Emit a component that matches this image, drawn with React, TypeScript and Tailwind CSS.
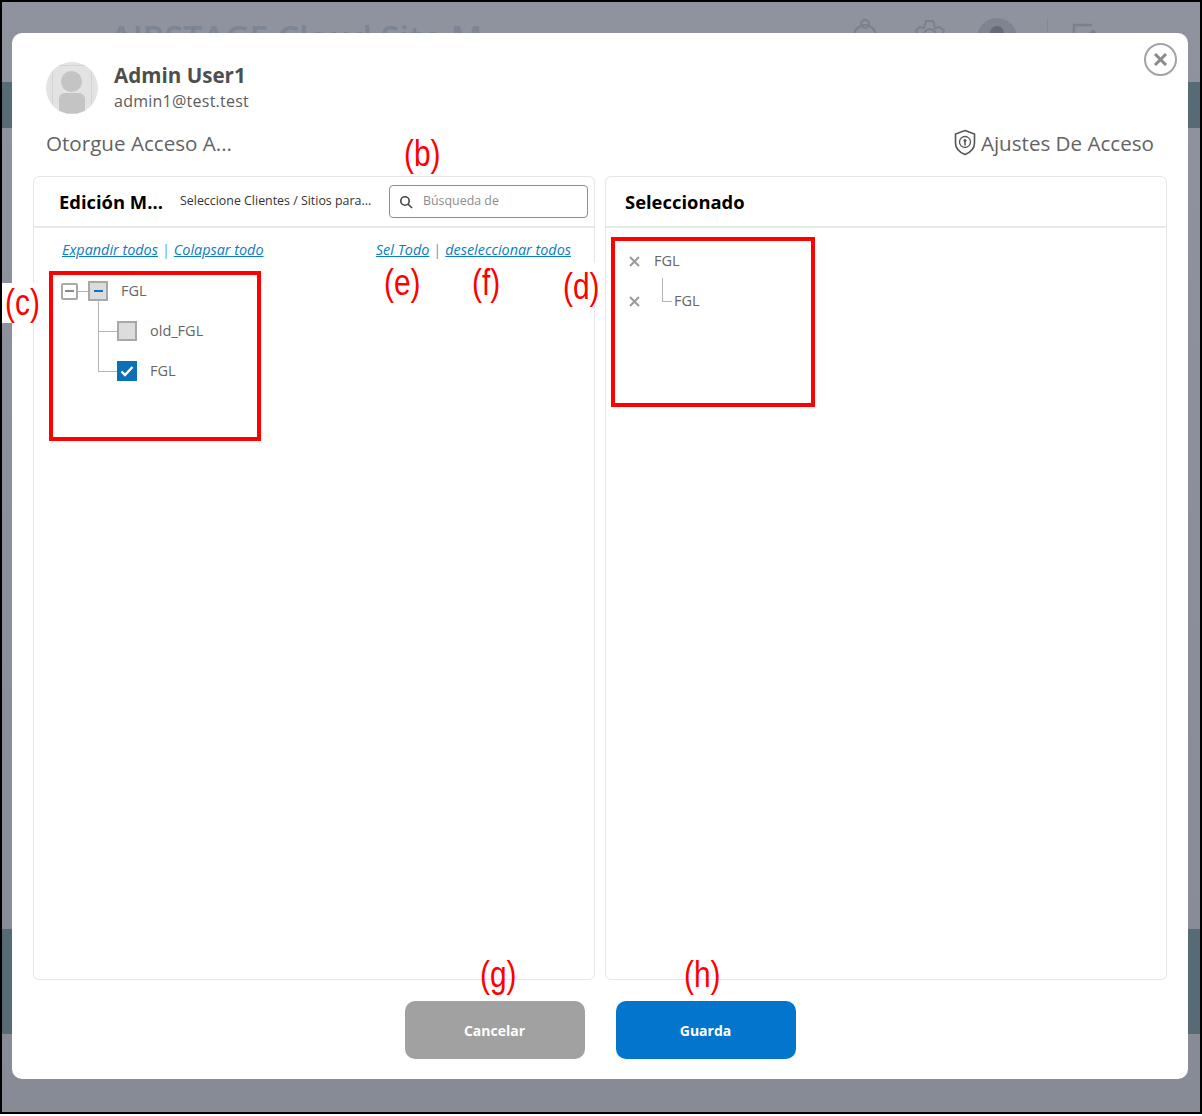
import React from "react";

function Red({ className, children }: { className: string; children: React.ReactNode }) {
  return (
    <span className={`absolute text-[#ff0000] text-[36px] leading-[40px] scale-x-[0.83] origin-left font-['Liberation_Sans',sans-serif] ${className}`}>
      {children}
    </span>
  );
}

function Link({ children }: { children: React.ReactNode }) {
  return <span className="italic underline text-[#0a7cc4] text-[14.4px] leading-[20px]">{children}</span>;
}

function Sep() {
  return <span className="text-[#0a7cc4] text-[14.4px] leading-[20px] opacity-70">|</span>;
}

function XMark() {
  return (
    <svg width="11" height="11" viewBox="0 0 11 11" className="shrink-0">
      <path d="M1 1 L10 10 M10 1 L1 10" stroke="#9a9a9a" strokeWidth="2" />
    </svg>
  );
}

export default function App() {
  return (
    <div className="h-[1116px] bg-white font-['Open_Sans',sans-serif]">
      <div className="relative h-[1114px] overflow-hidden border-2 border-black bg-gradient-to-b from-[#8e939e] to-[#868b95]">
        {/* dimmed page behind the dialog */}
        <div className="h-[80px] pl-[108px] pr-[100px] pt-[16px] flex items-start justify-between">
          <span className="text-[#7c8594] text-[34px] leading-[40px] font-semibold whitespace-nowrap">AIRSTAGE Cloud Site M</span>
          <div className="flex items-start gap-[30px] text-[#7b808a]">
            <svg width="34" height="34" viewBox="0 0 34 34" fill="none" stroke="currentColor" strokeWidth="2" className="-ml-[4px]"><circle cx="14" cy="6" r="4" /><path d="M3 28 V18 a11 11 0 0 1 22 0 V28" /></svg>
            <svg width="34" height="34" viewBox="0 0 34 34" fill="none" stroke="currentColor" strokeWidth="2" className="-ml-[2px]">
              <path d="M3 12 L7 9 L11 10 L13 3 L20 3 L22 10 L26 9 L31 12 L29 18" />
              <path d="M3 12 L5 18" />
              <circle cx="17" cy="17" r="6" />
            </svg>
            <div className="w-[40px] h-[40px] rounded-full bg-[#7f8490] flex justify-center pt-2"><div className="w-[14px] h-[14px] rounded-full bg-[#656a76]" /></div>
            <div className="w-px h-[34px] bg-[#838893]" />
            <svg width="30" height="34" viewBox="0 0 30 34" fill="none" stroke="currentColor" strokeWidth="2.5" className="-ml-[8px]"><path d="M22 7 H4 V34" /><path d="M18 18 L23 13 L28 18" /></svg>
          </div>
        </div>
        <div className="h-[46px] bg-[#566b75]" />
        <div className="h-[801px]" />
        <div className="h-[105px] bg-[#566b75]" />

        {/* dialog */}
        <div className="absolute left-[10px] top-[31px] w-[1176px] h-[1046px] bg-white rounded-[10px] flex flex-col">
          <div className="flex items-start pl-[34px] pt-[29px]">
            <div className="relative w-[52px] h-[52px] rounded-full bg-[#e3e3e3] overflow-hidden shrink-0">
              <div className="absolute left-[15px] top-[9px] w-[21px] h-[21px] rounded-full bg-[#c4c4c4]" />
              <div className="absolute left-[13px] top-[31px] w-[26px] h-[24px] rounded-[6px] bg-[#c4c4c4]" />
              <div className="absolute left-[6px] top-[3px] bottom-0 right-[6px] border border-[#d4d4d4]" />
            </div>
            <div className="ml-[16px] flex flex-col">
              <span className="text-[20.6px] leading-[27px] font-bold text-[#4e4e4e]">Admin User1</span>
              <span className="text-[16px] leading-[25px] text-[#5c5c5c] tracking-[0.25px]">admin1@test.test</span>
            </div>
          </div>

          <button className="absolute right-[11px] top-[10px] w-[33px] h-[33px] rounded-full border-2 border-[#a3a3a3] flex items-center justify-center">
            <svg width="15" height="15" viewBox="0 0 15 15"><path d="M2 2 L13 13 M13 2 L2 13" stroke="#8a8a8a" strokeWidth="3" /></svg>
          </button>

          <div className="flex items-center justify-between pl-[34px] pr-[34px] mt-[10px] h-[38px]">
            <span className="text-[20.6px] text-[#636363]">Otorgue Acceso A...</span>
            <div className="flex items-center gap-[5px]">
              <svg width="22" height="27" viewBox="0 0 22 27" fill="none" stroke="#555" strokeWidth="1.6">
                <path d="M11 1.5 L20.5 5 V14 C20.5 19.5 16 23.5 11 25.5 C6 23.5 1.5 19.5 1.5 14 V5 Z" />
                <circle cx="11" cy="13" r="5.5" strokeWidth="1.3" />
                <circle cx="11" cy="11.5" r="1.5" fill="#555" stroke="none" />
                <path d="M11 12 V16.5" strokeWidth="1.5" />
              </svg>
              <span className="text-[20.6px] text-[#636363]">Ajustes De Acceso</span>
            </div>
          </div>

          <div className="flex gap-[10px] px-[21px] mt-[14px] h-[804px]">
            {/* left panel */}
            <div className="w-[562px] h-full border border-[#e6e6e6] rounded-[6px] flex flex-col">
              <div className="h-[51px] border-b-2 border-[#e9e9e9] flex items-center pl-[25px] pr-[6px] shrink-0">
                <span className="w-[121px] text-[18.4px] font-bold text-black whitespace-nowrap">Edición M...</span>
                <span className="w-[209px] text-[12.4px] text-[#333] whitespace-nowrap">Seleccione Clientes / Sitios para...</span>
                <div className="w-[199px] h-[33px] border border-[#8f8f8f] rounded-[4px] flex items-center pl-[9px] gap-[10px]">
                  <svg width="14" height="14" viewBox="0 0 14 14" fill="none" stroke="#444" strokeWidth="1.6"><circle cx="6" cy="6" r="4.2" /><path d="M9.2 9.2 L13 13" /></svg>
                  <span className="text-[12.4px] text-[#8c8c8c]">Búsqueda de</span>
                </div>
              </div>
              <div className="flex justify-between pl-[28px] pr-[23px] pt-[12px]">
                <div className="flex gap-[4px]"><Link>Expandir todos</Link><Sep /><Link>Colapsar todo</Link></div>
                <div className="flex gap-[4px]"><Link>Sel Todo</Link><Sep /><Link>deseleccionar todos</Link></div>
              </div>
              <div className="relative mt-[21px] ml-[27px] text-[14.5px] text-[#666]">
                <div className="absolute left-[37px] top-[20px] w-px h-[71px] bg-[#b5b5b5]" />
                <div className="flex items-center h-[20px]">
                  <div className="w-[17px] h-[17px] border-2 border-[#a8a8a8] rounded-[2px] flex items-center justify-center"><div className="w-[9px] h-[2px] bg-[#8a8a8a]" /></div>
                  <div className="w-[10px] h-px bg-[#b5b5b5]" />
                  <div className="w-[20px] h-[20px] border-2 border-[#a8a8a8] bg-[#dcdcdc] flex items-center justify-center"><div className="w-[9px] h-[2px] bg-[#0a74c0]" /></div>
                  <span className="ml-[13px]">FGL</span>
                </div>
                <div className="flex items-center h-[20px] mt-[20px] ml-[37px]">
                  <div className="w-[19px] h-px bg-[#b5b5b5]" />
                  <div className="w-[20px] h-[20px] border-2 border-[#a8a8a8] bg-[#dcdcdc]" />
                  <span className="ml-[13px]">old_FGL</span>
                </div>
                <div className="flex items-center h-[20px] mt-[20px] ml-[37px]">
                  <div className="w-[19px] h-px bg-[#b5b5b5]" />
                  <div className="w-[20px] h-[20px] bg-[#0a70b8] flex items-center justify-center">
                    <svg width="14" height="12" viewBox="0 0 14 12" fill="none" stroke="white" strokeWidth="2.4"><path d="M1.5 6.5 L5 10 L12.5 2" /></svg>
                  </div>
                  <span className="ml-[13px]">FGL</span>
                </div>
              </div>
            </div>

            {/* right panel */}
            <div className="w-[562px] h-full border border-[#e6e6e6] rounded-[6px] flex flex-col">
              <div className="h-[51px] border-b-2 border-[#e9e9e9] flex items-center pl-[19px] shrink-0">
                <span className="text-[18.4px] font-bold text-black">Seleccionado</span>
              </div>
              <div className="relative pl-[23px] pt-[23px] text-[14.5px] text-[#666]">
                <div className="flex items-center h-[20px]"><XMark /><span className="ml-[14px]">FGL</span></div>
                <div className="flex items-center h-[20px] mt-[20px]">
                  <XMark />
                  <div className="ml-[22px] relative w-[10px] h-px bg-[#b5b5b5]">
                    <div className="absolute left-0 bottom-0 w-px h-[24px] bg-[#b5b5b5]" />
                  </div>
                  <span className="ml-[2px]">FGL</span>
                </div>
              </div>
            </div>
          </div>

          <div className="flex justify-center gap-[31px] mt-[21px]">
            <button className="w-[180px] h-[58px] rounded-[10px] bg-[#a1a1a1] text-white text-[14px] font-bold">Cancelar</button>
            <button className="w-[180px] h-[58px] rounded-[10px] bg-[#0475cc] text-white text-[14px] font-bold">Guarda</button>
          </div>
        </div>

        {/* red call-out annotations */}
        <div className="absolute left-[609px] top-[235px] w-[204px] h-[170px] border-[4px] border-[#ff0000]" />
        <div className="absolute left-[47px] top-[269px] w-[212px] h-[170px] border-[4px] border-[#ff0000]" />
        <div className="absolute -left-[2px] top-[281px] w-[40px] h-[40px] bg-white" />
        <div className="absolute left-[558px] top-[261px] w-[38px] h-[42px] bg-white" />
        <Red className="left-[3px] top-[281px]">(c)</Red>
        <Red className="left-[402px] top-[132px]">(b)</Red>
        <Red className="left-[382px] top-[261px]">(e)</Red>
        <Red className="left-[470px] top-[261px]">(f)</Red>
        <Red className="left-[561px] top-[265px]">(d)</Red>
        <Red className="left-[478px] top-[953px]">(g)</Red>
        <Red className="left-[682px] top-[953px]">(h)</Red>
      </div>
    </div>
  );
}
